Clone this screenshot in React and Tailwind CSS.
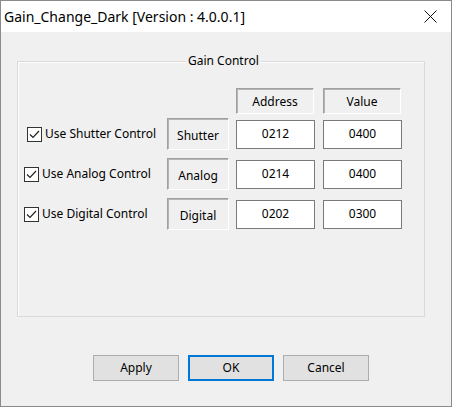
import { useState } from 'react';

const rows = [
  { label: 'Use Shutter Control', reg: 'Shutter', addr: '0212', value: '0400', indent: 'pl-[9px]' },
  { label: 'Use Analog Control', reg: 'Analog', addr: '0214', value: '0400', indent: 'pl-[6px]' },
  { label: 'Use Digital Control', reg: 'Digital', addr: '0202', value: '0300', indent: 'pl-[6px]' },
];

function CheckBox({ checked, onChange }) {
  return (
    <button
      type="button"
      onClick={onChange}
      className="flex h-[15px] w-[15px] shrink-0 items-center justify-center border border-[#333] bg-white"
    >
      {checked && (
        <svg width="13" height="13" viewBox="0 0 13 13" fill="none">
          <path d="M2 6.5 L5 9.5 L11 3" stroke="#222" strokeWidth="1.2" />
        </svg>
      )}
    </button>
  );
}

const sunken =
  'flex items-center justify-center border border-t-[#a0a0a0] border-l-[#a0a0a0] border-b-white border-r-white shadow-[inset_1px_1px_0_#b4b4b4]';

function App() {
  const [checks, setChecks] = useState([true, true, true]);

  const toggle = (i) => setChecks((c) => c.map((v, j) => (j === i ? !v : v)));

  return (
    <div className="flex h-[407px] w-[452px] flex-col border border-[#8a8a8a] bg-[#f0f0f0] font-['Segoe_UI','Noto_Sans',sans-serif] text-[12px] text-black">
      <div className="flex h-[31px] shrink-0 items-center justify-between bg-white pl-[3px] pr-[14px]">
        <span className="text-[14px] leading-none">Gain_Change_Dark [Version : 4.0.0.1]</span>
        <svg width="13" height="13" viewBox="0 0 13 13" fill="none">
          <path d="M0.5 0.5 L12.5 12.5 M12.5 0.5 L0.5 12.5" stroke="#111" strokeWidth="1" />
        </svg>
      </div>

      <div className="flex flex-1 flex-col">
        <div className="relative ml-[16px] mt-[29px] h-[256px] w-[408px] border border-[#d9d9d9] shadow-[inset_1px_1px_0_#fff]">
          <span className="absolute left-[168px] top-[-10px] bg-[#f0f0f0] px-[2px] leading-[18px]">
            Gain Control
          </span>

          <div className="ml-[218px] mt-[26px] flex h-[26px] gap-[9px]">
            <div className={`${sunken} w-[78px] pt-[1px]`}>Address</div>
            <div className={`${sunken} w-[78px] pt-[1px]`}>Value</div>
          </div>

          {rows.map((row, i) => (
            <div key={row.reg} className="flex h-[40px] items-center">
              <div className={`flex w-[149px] items-center gap-[3px] ${row.indent}`}>
                <CheckBox checked={checks[i]} onChange={() => toggle(i)} />
                <span className="whitespace-nowrap leading-none">{row.label}</span>
              </div>
              <div className={`${sunken} h-[32px] w-[62px] pt-[3px]`}>{row.reg}</div>
              <div className="ml-[7px] flex h-[29px] w-[79px] items-center justify-center border border-[#7a7a7a] bg-white">
                {row.addr}
              </div>
              <div className="ml-[8px] flex h-[29px] w-[79px] items-center justify-center border border-[#7a7a7a] bg-white">
                {row.value}
              </div>
            </div>
          ))}
        </div>

        <div className="ml-[92px] mt-[38px] flex gap-[9px]">
          <button type="button" className="h-[26px] w-[86px] border border-[#adadad] bg-[#e1e1e1]">
            Apply
          </button>
          <button type="button" className="h-[26px] w-[86px] border-2 border-[#0078d7] bg-[#e1e1e1]">
            OK
          </button>
          <button type="button" className="h-[26px] w-[86px] border border-[#adadad] bg-[#e1e1e1]">
            Cancel
          </button>
        </div>
      </div>
    </div>
  );
}

export default App;
